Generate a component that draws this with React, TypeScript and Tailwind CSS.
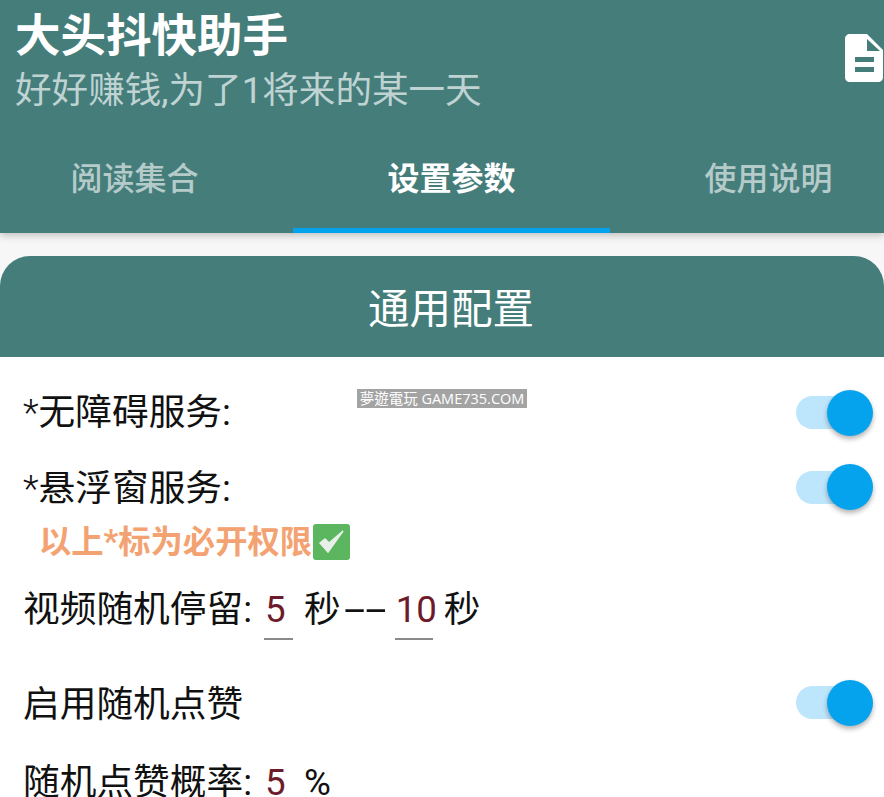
const cjk = "font-['Roboto','Noto_Sans_CJK_SC',sans-serif]";

const Toggle = () => (
    <div className="relative w-[77px] h-[46px] flex items-center shrink-0">
        <div className="w-[64px] h-[33px] rounded-full bg-[#bde5fb]"></div>
        <div className="absolute right-0 top-0 w-[46px] h-[46px] rounded-full bg-[#05a3ee] shadow-[0_3px_5px_rgba(0,0,0,0.3)]"></div>
    </div>
);

const Field = ({ value, className }: { value: string; className: string }) => (
    <span className={`block h-[55px] pl-[1px] text-[#6d1b2a] border-b-2 border-[#8a8a8a] ${className}`}>
        {value}
    </span>
);

const DocIcon = () => (
    <svg width="38" height="48" viewBox="0 0 38 48" className="shrink-0 -mt-[3px]">
        <path
            fillRule="evenodd"
            fill="#ffffff"
            d="M5 0H22L38 16V43C38 46 36 48 33 48H5C2 48 0 46 0 43V5C0 2 2 0 5 0ZM22 5V17H35ZM10 23V28H29V23ZM10 33V38H29V33Z"
        />
    </svg>
);

const CheckEmoji = () => (
    <svg width="37" height="36" viewBox="0 0 37 36" className="shrink-0">
        <rect width="37" height="36" rx="3" fill="#5cb660" />
        <path d="M7 19L15 28L30 7L16 19L12 15Z" fill="#e9efe9" stroke="#e9efe9" strokeWidth="1.5" />
    </svg>
);

const App = () => {
    return (
        <div className={`w-[884px] h-[797px] overflow-hidden bg-[#f7f7f7] relative ${cjk}`}>
            <header className="h-[233px] bg-[#457d7b] flex flex-col shadow-[0_2px_8px_rgba(0,0,0,0.25)]">
                <div className="flex items-center justify-between h-[118px] pl-[15px] pr-[1px]">
                    <div className="pt-[2px]">
                        <h1 className="text-white text-[45.5px] font-bold leading-[62px]">大头抖快助手</h1>
                        <p className="text-[#bfd3d2] text-[36.6px] leading-[46px]">好好赚钱,为了1将来的某一天</p>
                    </div>
                    <DocIcon />
                </div>
                <nav className="flex flex-1 -ml-[24px] w-[951px] text-[32px]">
                    <div className="flex-1 flex items-center justify-center pt-[12px] border-b-[5px] border-transparent text-[#b5cbca] font-medium">阅读集合</div>
                    <div className="flex-1 flex items-center justify-center pt-[12px] border-b-[5px] border-[#05a3ee] text-white font-bold">设置参数</div>
                    <div className="flex-1 flex items-center justify-center pt-[12px] border-b-[5px] border-transparent text-[#b5cbca] font-medium">使用说明</div>
                </nav>
            </header>

            <section className="mt-[23px]">
                <div className="h-[101px] rounded-t-[30px] bg-[#457d7b] flex items-center justify-center pl-[18px] pt-[8px] text-white text-[41.5px]">
                    通用配置
                </div>
                <div className="h-[440px] bg-white text-[#111111] text-[36.7px] leading-[50px] pl-[23px] pr-[11px] pt-[18px]">
                    <div className="flex items-center justify-between h-[75px]">
                        <span><span className="font-light">*</span>无障碍服务:</span>
                        <Toggle />
                    </div>
                    <div className="flex items-center justify-between h-[74px]">
                        <span className="pt-[4px]"><span className="font-light">*</span>悬浮窗服务:</span>
                        <Toggle />
                    </div>
                    <div className="flex items-center gap-[1px] pl-[16px] h-[36px] text-[#f3a272] text-[32.3px] font-bold">
                        <span>以上*标为必开权限</span>
                        <CheckEmoji />
                    </div>
                    <div className="flex items-start mt-[25px]">
                        <span>视频随机停留:</span>
                        <Field value="5" className="w-[29px] ml-[12px]" />
                        <span className="ml-[11px]">秒</span>
                        <span className="block w-[40px] ml-[3px] origin-left scale-x-[2.1]">--</span>
                        <Field value="10" className="w-[38px] ml-[11px]" />
                        <span className="ml-[11px]">秒</span>
                    </div>
                    <div className="flex items-center justify-between h-[75px] mt-[25px]">
                        <span className="pt-[4px]">启用随机点赞</span>
                        <Toggle />
                    </div>
                    <div className="flex items-center h-[86px]">
                        <span>随机点赞概率:</span>
                        <span className="ml-[12px] w-[29px] pl-[1px] text-[#6d1b2a]">5</span>
                        <span className="ml-[11px]">%</span>
                    </div>
                </div>
            </section>

            <div className="absolute left-[357px] top-[389px] w-[170px] h-[19px] bg-[#a3a3a3] flex items-center justify-center text-white text-[14.5px] whitespace-nowrap font-['Open_Sans','Noto_Sans_CJK_TC',sans-serif]">
                夢遊電玩 GAME735.COM
            </div>
        </div>
    );
};

export default App;
